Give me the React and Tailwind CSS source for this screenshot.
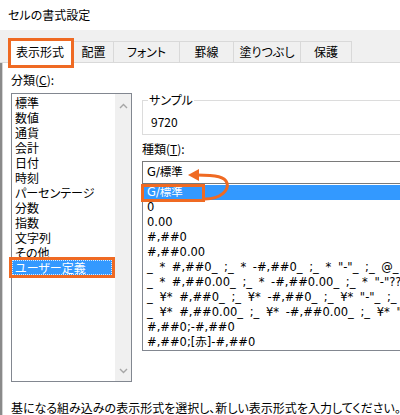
import React from 'react'

const categories = ['標準', '数値', '通貨', '会計', '日付', '時刻', 'パーセンテージ', '分数', '指数', '文字列', 'その他', 'ユーザー定義']

const formats = [
  '0',
  '0.00',
  '#,##0',
  '#,##0.00',
  '_ * #,##0_ ;_ * -#,##0_ ;_ * "-"_ ;_ @_ ',
  '_ * #,##0.00_ ;_ * -#,##0.00_ ;_ * "-"??_ ;_ @_ ',
  '_ ¥* #,##0_ ;_ ¥* -#,##0_ ;_ ¥* "-"_ ;_ @_ ',
  '_ ¥* #,##0.00_ ;_ ¥* -#,##0.00_ ;_ ¥* "-"??_ ;_ @_ ',
  '#,##0;-#,##0',
  '#,##0;[赤]-#,##0',
]

const tabs = [
  { label: '配置', w: 'w-[40px]' },
  { label: 'フォント', w: 'w-[66px]' },
  { label: '罫線', w: 'w-[54px]' },
  { label: '塗りつぶし', w: 'w-[67px]' },
  { label: '保護', w: 'w-[51px]' },
]

function Chevron({ down }) {
  return (
    <svg width="9" height="6" viewBox="0 0 9 6" className="text-[#a6a6a6]">
      <path
        d={down ? 'M1 1 L4.5 4.5 L8 1' : 'M1 5 L4.5 1.5 L8 5'}
        fill="none"
        stroke="currentColor"
        strokeWidth="1.4"
      />
    </svg>
  )
}

export default function App() {
  return (
    <div className="w-[400px] h-[415px] overflow-hidden bg-white text-black text-[12px] font-['Noto_Sans_CJK_JP',sans-serif] [font-feature-settings:'palt']">
      {/* title bar */}
      <div className="h-[30px] flex items-center pl-[8px] leading-[16px]">セルの書式設定</div>

      {/* tabs */}
      <div className="h-[33px] bg-[#f0f0f0] border-b border-[#d9d9d9] flex items-end pl-[8px]">
        <div className="relative z-10 -mb-px h-[25px] w-[66px] bg-white flex items-center pl-[8px] pt-[2px]">
          表示形式
          <span className="absolute left-0 top-0 w-[66px] h-[30px] border-[3px] border-[#ef6a23]" />
        </div>
        {tabs.map((t) => (
          <div
            key={t.label}
            className={`${t.w} h-[21px] border-t border-r border-[#d9d9d9] flex items-center justify-center`}
          >
            {t.label}
          </div>
        ))}
      </div>

      {/* body */}
      <div className="flex h-[352px]">
        <div className="w-[7px] bg-[#f0f0f0] border-l-2 border-[#8a8a8a]" />
        <div className="flex-1 border-l border-[#d4d4d4] pl-[8px]">
          <div className="flex gap-[10px]">
            {/* left column */}
            <div className="w-[121px] shrink-0 pt-[9px]">
              <div className="h-[16px] leading-[16px]">
                分類(<u>C</u>):
              </div>
              <div className="mt-[5px] h-[289px] border border-[#828790] flex">
                <div className="flex-1 pt-[1px]">
                  {categories.map((c) =>
                    c === 'ユーザー定義' ? (
                      <div
                        key={c}
                        className="h-[15px] w-[100px] leading-[13px] bg-[#3399ff] text-white pl-[2px] border border-dotted border-[#d6eaff] outline-[3px] outline-solid outline-[#ef6a23]"
                      >
                        {c}
                      </div>
                    ) : (
                      <div key={c} className="h-[15px] leading-[15px] pl-[3px]">
                        {c}
                      </div>
                    )
                  )}
                </div>
                <div className="w-[16px] bg-[#f0f0f0] flex flex-col items-center justify-between pt-[9px] pb-[7px]">
                  <Chevron />
                  <Chevron down />
                </div>
              </div>
            </div>

            {/* right column */}
            <div className="relative w-[300px] shrink-0 pt-[29px]">
              <fieldset className="border border-[#dcdcdc] border-t-[#dcdcdc]">
                <legend className="ml-[5px] px-[1px] leading-[16px]">サンプル</legend>
                <div className="pl-[8px] pt-[6px] pb-[4px] h-[26px] leading-[16px]">9720</div>
              </fieldset>
              <div className="mt-[6px] h-[16px] leading-[16px]">
                種類(<u>T</u>):
              </div>
              <div className="mt-[4px] h-[23px] border border-[#7a7a7a] flex items-center pl-[4px] font-['DejaVu_Sans','Noto_Sans_CJK_JP',sans-serif] text-[11.5px]">
                G/標準
              </div>
              <div className="h-[167px] border-x border-b border-[#828790] pt-[1px] font-['DejaVu_Sans','Noto_Sans_CJK_JP',sans-serif] text-[11.5px] [word-spacing:3px] whitespace-nowrap">
                <div className="h-[15px] bg-[#3399ff] text-white flex items-center pl-px">
                  <span className="h-[12px] w-[58px] flex items-center pl-[3px] outline-[3px] outline-solid outline-[#ef6a23]">
                    G/標準
                  </span>
                </div>
                {formats.map((f) => (
                  <div key={f} className="h-[15px] leading-[15px] pl-[4px]">
                    {f}
                  </div>
                ))}
              </div>

              {/* annotation arrow */}
              <svg
                className="absolute left-[43px] top-[102px]"
                width="50"
                height="40"
                viewBox="0 0 50 40"
              >
                <path
                  d="M20 34 C36 34, 44 25, 42 18 C40 12, 32 10, 12 10"
                  fill="none"
                  stroke="#ef6a23"
                  strokeWidth="3"
                />
                <polygon points="3,10 14,4 14,16" fill="#ef6a23" />
              </svg>
            </div>
          </div>

          <div className="mt-[18px] h-[16px] leading-[16px] whitespace-nowrap">
            基になる組み込みの表示形式を選択し、新しい表示形式を入力してください。
          </div>
        </div>
      </div>
    </div>
  )
}
